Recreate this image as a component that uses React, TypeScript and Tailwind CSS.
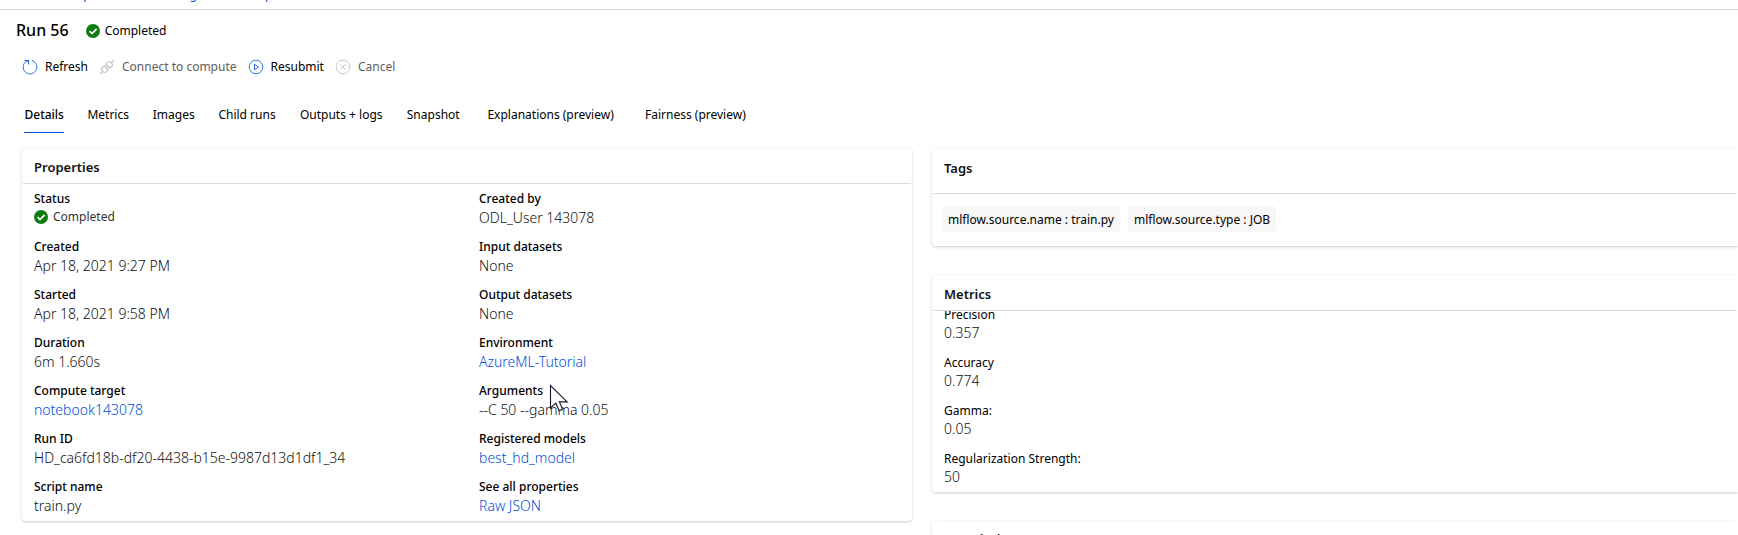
import React from 'react';

type Field = { label: string; value: React.ReactNode; pointer?: boolean };

const crumbs = ['Home', 'Experiments', 'ml-logistic-runs-exp'];

const tabs = [
  'Details',
  'Metrics',
  'Images',
  'Child runs',
  'Outputs + logs',
  'Snapshot',
  'Explanations (preview)',
  'Fairness (preview)',
];

const metrics: [string, string][] = [
  ['Precision', '0.357'],
  ['Accuracy', '0.774'],
  ['Gamma:', '0.05'],
  ['Regularization Strength:', '50'],
];

const tags = ['mlflow.source.name : train.py', 'mlflow.source.type : JOB'];

function CheckIcon() {
  return (
    <svg className="size-[14px] shrink-0" viewBox="0 0 14 14" fill="none" aria-hidden="true">
      <circle cx="7" cy="7" r="7" fill="#107c10" />
      <path d="M3.6 7.2 6 9.5 10.6 4.9" stroke="#fff" strokeWidth="1.7" />
    </svg>
  );
}

function RefreshIcon() {
  return (
    <svg className="size-4 shrink-0" viewBox="0 0 16 16" fill="none" stroke="#2266e3" aria-hidden="true">
      <path d="M10 1.4A6.9 6.9 0 1 1 3.6 2.7L6.5 1.6" strokeWidth="0.9" />
      <path d="M2.5 1.5H6.5V5.5" strokeWidth="1.1" />
    </svg>
  );
}

function PlugIcon() {
  return (
    <svg className="size-4 shrink-0" viewBox="0 0 16 16" fill="none" stroke="#c8c6c4" strokeWidth="1.2" aria-hidden="true">
      <path d="M1.2 14.8 4 12M12 4 14.8 1.2" />
      <path d="M4.8 6.8 9.2 11.2 7.8 12.4A2.9 2.9 0 0 1 3.6 8.2Z" />
      <path d="M6.8 4.8 11.2 9.2 12.4 7.8A2.9 2.9 0 0 0 8.2 3.6Z" />
      <path d="M6 8 8 6M8 10 10 8" />
    </svg>
  );
}

function PlayIcon() {
  return (
    <svg className="size-4 shrink-0" viewBox="0 0 16 16" fill="none" stroke="#2266e3" aria-hidden="true">
      <circle cx="8" cy="8" r="6.8" strokeWidth="0.9" />
      <path d="M6.5 5.2V10.8L10.5 8Z" />
    </svg>
  );
}

function CancelIcon() {
  return (
    <svg className="size-4 shrink-0" viewBox="0 0 16 16" fill="none" stroke="#c8c6c4" aria-hidden="true">
      <circle cx="8" cy="8" r="6.8" />
      <path d="M5.2 5.2 10.8 10.8M10.8 5.2 5.2 10.8" />
    </svg>
  );
}

function Pointer() {
  return (
    <svg className="absolute top-[2px] left-[81px] h-[28px] w-[20px]" viewBox="0 0 20 28" aria-hidden="true">
      <path
        d="M1.5 1.5V24L6.8 19.2 10.2 26.8 13.6 25.3 10.4 17.9H18.2Z"
        fill="#fff"
        stroke="#14142b"
        strokeWidth="1.1"
      />
    </svg>
  );
}

function Link({ children }: { children: React.ReactNode }) {
  return (
    <a href="#" className="text-[#004fdc]">
      {children}
    </a>
  );
}

const properties: Field[] = [
  {
    label: 'Status',
    value: (
      <span className="flex items-center gap-[5px] pt-px text-xs font-normal text-[#333]">
        <CheckIcon />
        Completed
      </span>
    ),
  },
  { label: 'Created by', value: 'ODL_User 143078' },
  { label: 'Created', value: 'Apr 18, 2021 9:27 PM' },
  { label: 'Input datasets', value: 'None' },
  { label: 'Started', value: 'Apr 18, 2021 9:58 PM' },
  { label: 'Output datasets', value: 'None' },
  { label: 'Duration', value: '6m 1.660s' },
  { label: 'Environment', value: <Link>AzureML-Tutorial</Link> },
  { label: 'Compute target', value: <Link>notebook143078</Link> },
  { label: 'Arguments', value: '--C 50 --gamma 0.05', pointer: true },
  { label: 'Run ID', value: 'HD_ca6fd18b-df20-4438-b15e-9987d13d1df1_34' },
  { label: 'Registered models', value: <Link>best_hd_model</Link> },
  { label: 'Script name', value: 'train.py' },
  { label: 'See all properties', value: <Link>Raw JSON</Link> },
];

const panel = 'bg-white px-px shadow-[0_1px_3px_rgba(0,0,0,0.2)]';
const heading = 'border-b border-[#dadada] px-[11px] text-[13px] leading-5 font-semibold text-[#111]';

export default function App() {
  return (
    <div className="h-screen overflow-hidden bg-white font-['Noto_Sans',sans-serif] text-xs text-black">
      <nav
        aria-label="Breadcrumb"
        className="flex h-[10px] items-end overflow-hidden border-b border-[#dadada] pb-[6px] pl-4 leading-4 text-[#004fdc]"
      >
        {crumbs.map((crumb) => (
          <a key={crumb} href="#" className="mr-5 shrink-0">
            {crumb}
          </a>
        ))}
      </nav>

      <header className="flex h-10 items-center px-4 pt-0.5">
        <h1 className="text-[16px] font-medium">Run 56</h1>
        <span className="ml-[17px] flex items-center gap-[5px]">
          <CheckIcon />
          Completed
        </span>
      </header>

      <div role="toolbar" aria-label="Run actions" className="flex h-8 items-center gap-[11px] px-[22px] pt-0.5">
        <button type="button" className="flex items-center gap-[7px]">
          <RefreshIcon />
          Refresh
        </button>
        <button type="button" disabled className="flex items-center gap-[7px] text-[#605e5c]">
          <PlugIcon />
          Connect to compute
        </button>
        <button type="button" className="flex items-center gap-[7px]">
          <PlayIcon />
          Resubmit
        </button>
        <button type="button" disabled className="flex items-center gap-[7px] text-[#605e5c]">
          <CancelIcon />
          Cancel
        </button>
      </div>

      <div role="tablist" className="mt-[13px] flex gap-[22px] px-6">
        {tabs.map((tab, i) => (
          <button
            key={tab}
            type="button"
            role="tab"
            aria-selected={i === 0}
            data-label={tab}
            className={`h-[38px] border-b pt-0.5 text-center after:invisible after:block after:h-0 after:overflow-hidden after:font-semibold after:content-[attr(data-label)] ${
              i === 0 ? 'border-[#0058e0] font-medium' : 'border-transparent'
            } ${tab.includes('preview') ? 'px-0.5' : ''}`}
          >
            {tab}
          </button>
        ))}
      </div>

      <main className="mt-[15px] grid grid-cols-[890fr_806fr] items-start gap-5 pl-[22px]">
        <section className={`${panel} rounded-sm`}>
          <h2 className={`${heading} pt-[9px] pb-1.5`}>Properties</h2>
          <dl className="grid grid-cols-2 gap-x-0.5 gap-y-3 pt-1.5 pb-[7px]">
            {properties.map(({ label, value, pointer }) => (
              <div key={label} className="relative h-9 px-[11px]">
                <dt className="leading-[18px] font-medium">{label}</dt>
                <dd className="text-sm leading-5 font-light text-[#111]">{value}</dd>
                {pointer && <Pointer />}
              </div>
            ))}
          </dl>
        </section>

        <div className="flex flex-col gap-[29px] pt-px">
          <section className={`${panel} rounded-l-sm`}>
            <h2 className={`${heading} pt-[9px] pb-[15px]`}>Tags</h2>
            <ul className="flex gap-2 px-[9px] pt-3 pb-[14px]">
              {tags.map((tag) => (
                <li key={tag} className="rounded-sm bg-[#f7f7f7] px-1.5 pt-0.5 leading-6">
                  {tag}
                </li>
              ))}
            </ul>
          </section>

          <section className={`${panel} rounded-l-sm`}>
            <h2 className={`${heading} pt-[9px] pb-1.5`}>Metrics</h2>
            <div className="overflow-hidden">
              <dl className="-mt-[5px] grid gap-y-3 px-[11px] pb-1.5">
                {metrics.map(([label, value]) => (
                  <div key={label}>
                    <dt className="leading-[18px]">{label}</dt>
                    <dd className="text-sm leading-[18px] font-light text-[#111]">{value}</dd>
                  </div>
                ))}
              </dl>
            </div>
          </section>

          <section className={`${panel} rounded-l-sm`}>
            <h2 className={`${heading} py-2`}>Description</h2>
          </section>
        </div>
      </main>
    </div>
  );
}
